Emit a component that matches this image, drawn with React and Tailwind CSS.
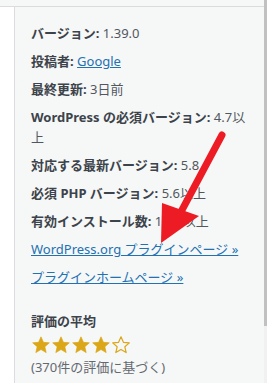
import React from "react";

const Star = ({ filled }) => (
  <svg width="20" height="20" viewBox="0 0 24 24" className="shrink-0">
    <path
      d="M12 2.2l2.9 6.6 7.1.6-5.4 4.7 1.6 7-6.2-3.7-6.2 3.7 1.6-7L2 9.4l7.1-.6z"
      fill={filled ? "#dba617" : "none"}
      stroke="#dba617"
      strokeWidth={filled ? 0.8 : 1.4}
      strokeLinejoin="round"
    />
  </svg>
);

export default function App() {
  const font = { fontFamily: '"Noto Sans", "Noto Sans CJK JP", sans-serif' };
  return (
    <div className="flex h-[383px] w-[267px] overflow-hidden bg-white" style={font}>
      <div className="relative flex flex-1 flex-col">
        <div className="h-[7px] bg-[#f6f7f7] border-b border-[#dcdcde]" />
        <div className="flex flex-1">
          <div className="w-[14px] bg-white" />
          <div className="flex-1 border-l border-[#dcdcde] bg-[#f6f7f7] pl-[16px] pr-[16px] pt-[16px] text-[13px] leading-[20px] text-[#50575e]">
            <ul className="flex flex-col gap-[8px]">
              <li><strong className="font-bold text-[#3c434a]">バージョン:</strong> 1.39.0</li>
              <li><strong className="font-bold text-[#3c434a]">投稿者:</strong> <a className="text-[#2271b1] underline">Google</a></li>
              <li><strong className="font-bold text-[#3c434a]">最終更新:</strong> 3日前</li>
              <li><strong className="font-bold text-[#3c434a]">WordPress の必須バージョン:</strong> 4.7以上</li>
              <li><strong className="font-bold text-[#3c434a]">対応する最新バージョン:</strong> 5.8</li>
              <li><strong className="font-bold text-[#3c434a]">必須 PHP バージョン:</strong> 5.6以上</li>
              <li><strong className="font-bold text-[#3c434a]">有効インストール数:</strong> 17万以上</li>
              <li><a className="text-[#2271b1] underline">WordPress.org プラグインページ »</a></li>
              <li><a className="text-[#2271b1] underline">プラグインホームページ »</a></li>
            </ul>
            <h3 className="mt-[24px] font-semibold text-[#3c434a]">評価の平均</h3>
            <div className="mt-[4px] flex h-[20px] items-center">
              <Star filled />
              <Star filled />
              <Star filled />
              <Star filled />
              <Star />
            </div>
            <div className="mt-[2px] text-[#646970]">(370件の評価に基づく)</div>
          </div>
        </div>
        <svg className="absolute left-0 top-0 pointer-events-none" width="264" height="383">
          <line x1="222" y1="135" x2="182" y2="210" stroke="#ed1c24" strokeWidth="7" strokeLinecap="round" />
          <polygon points="161,243 162,203 199,216" fill="#ed1c24" />
        </svg>
      </div>
      <div className="flex w-[3px] flex-col bg-[#f1f1f1]">
        <div className="h-[326px] bg-[#c1c1c1]" />
      </div>
    </div>
  );
}
